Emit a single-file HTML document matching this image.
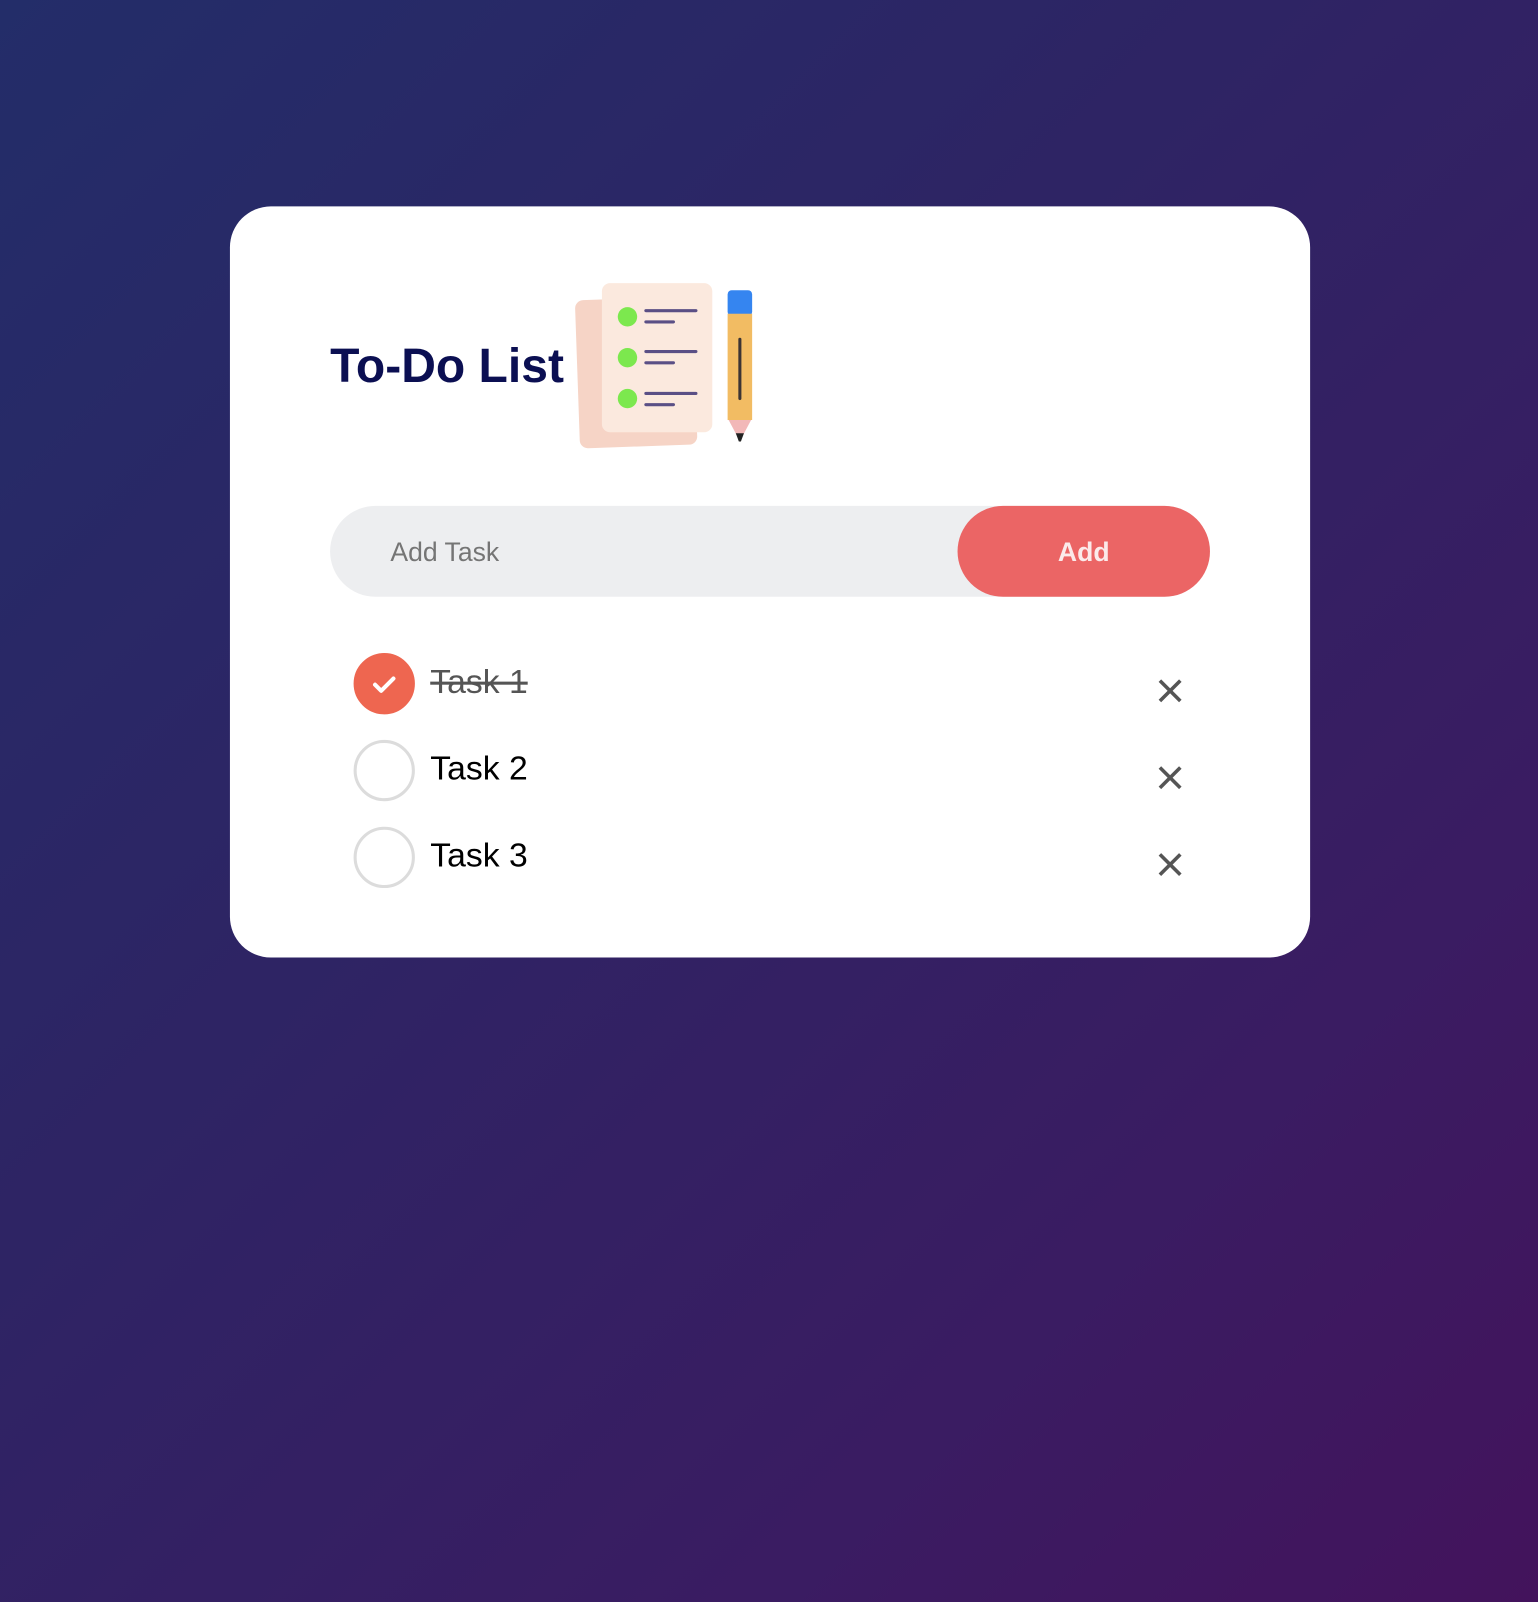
<!DOCTYPE html>
<html><head><meta charset="utf-8"><style>
html,body{margin:0;padding:0;}
body{width:1538px;height:1602px;overflow:hidden;background:linear-gradient(135deg,#232d69 0%,#2e2464 40%,#3a1c62 75%,#43135c 100%);font-family:"Liberation Sans",Arial,sans-serif;}
#w{position:absolute;left:0;top:0;width:1505px;height:1568px;transform:scale(1.02193);transform-origin:0 0;}
.card{position:absolute;left:225px;top:202px;width:1057px;height:735px;background:#fff;border-radius:40px;}
h1{position:absolute;left:98px;top:128px;margin:0;font-size:47px;font-weight:bold;color:#0b0f52;letter-spacing:0;}
.icon{position:absolute;left:335px;top:72px;}
.inp{position:absolute;left:98px;top:293px;width:861px;height:89px;background:#edeef0;border-radius:45px;}
.ph{position:absolute;left:59px;top:30px;font-size:26px;color:#757575;}
.btn{position:absolute;left:614px;top:0;width:247px;height:89px;background:#eb6565;border-radius:45px;color:#fbeaea;font-weight:bold;font-size:26px;text-align:center;line-height:90px;}
.row{position:absolute;left:121px;height:60px;width:820px;}
.c{position:absolute;left:0;top:0;width:54px;height:54px;border:3px solid #dcdcdc;border-radius:50%;}
.c.on{background:#ee6650;border-color:#ee6650;}
.t{position:absolute;left:75px;top:9px;font-size:33px;color:#000;}
.t.done{color:#555;text-decoration:line-through;text-decoration-thickness:3px;}
.x{position:absolute;left:787px;top:25px;}
</style></head><body><div id="w">
<div class="card">
<h1>To-Do List</h1>
<svg class="icon" width="190" height="170" viewBox="0 0 190 170">
<rect x="5" y="18" width="115" height="145" rx="8" fill="#f6d4c6" transform="rotate(-2 60 90)"/>
<rect x="29" y="3" width="108" height="146" rx="8" fill="#fbe9de"/>
<circle cx="54" cy="36" r="9.5" fill="#7ce84e"/><circle cx="54" cy="76" r="9.5" fill="#7ce84e"/><circle cx="54" cy="116" r="9.5" fill="#7ce84e"/>
<g stroke="#5a4f85" stroke-width="3" stroke-linecap="round">
<line x1="72" y1="30" x2="121" y2="30"/><line x1="72" y1="41" x2="99" y2="41"/>
<line x1="72" y1="70" x2="121" y2="70"/><line x1="72" y1="81" x2="99" y2="81"/>
<line x1="72" y1="111" x2="121" y2="111"/><line x1="72" y1="122" x2="99" y2="122"/>
</g>
<rect x="152" y="10" width="24" height="25" rx="4" fill="#3585f0"/>
<rect x="152" y="33" width="24" height="104" fill="#f2bc63"/>
<line x1="164" y1="58" x2="164" y2="116" stroke="#3b3434" stroke-width="3" stroke-linecap="round"/>
<path d="M153 137 L175 137 L167 152 L161 152 Z" fill="#f2b8b8"/>
<path d="M160 150 L168 150 L165 158 L163 158 Z" fill="#222"/>
</svg>
<div class="inp"><div class="ph">Add Task</div><div class="btn">Add</div></div>
<div class="row" style="top:437px"><div class="c on"><svg width="54" height="54" viewBox="0 0 54 54" style="position:absolute;left:0;top:0"><path d="M18 28 L24 34 L36 22" fill="none" stroke="#fff" stroke-width="4" stroke-linecap="round" stroke-linejoin="round"/></svg></div><div class="t done">Task 1</div><svg class="x" width="24" height="24" viewBox="0 0 24 24"><path d="M2 2L22 22M22 2L2 22" stroke="#555" stroke-width="3.5"/></svg></div>
<div class="row" style="top:522px"><div class="c"></div><div class="t">Task 2</div><svg class="x" width="24" height="24" viewBox="0 0 24 24"><path d="M2 2L22 22M22 2L2 22" stroke="#555" stroke-width="3.5"/></svg></div>
<div class="row" style="top:607px"><div class="c"></div><div class="t">Task 3</div><svg class="x" width="24" height="24" viewBox="0 0 24 24"><path d="M2 2L22 22M22 2L2 22" stroke="#555" stroke-width="3.5"/></svg></div>
</div>
</div></body></html>
